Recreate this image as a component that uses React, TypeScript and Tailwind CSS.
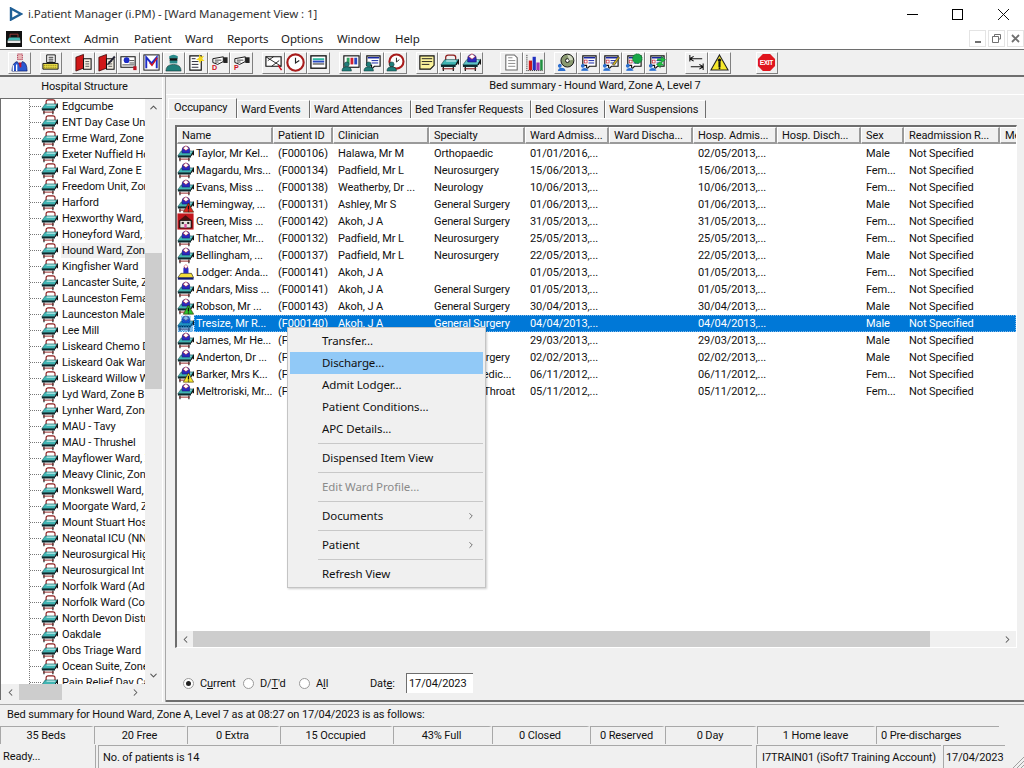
import React from "react";
import { ChevronUp, ChevronDown, ChevronLeft, ChevronRight } from "lucide-react";

type P = { children: React.ReactNode; s?: number };
const Ic = ({ children, s = 20 }: P) => (
  <svg width={s} height={s} viewBox="0 0 20 20" className="block shrink-0">{children}</svg>
);

const BedShape = ({ top = "#3fb4b2", head = false }: { top?: string; head?: boolean }) => (
  <g>
    {!head && <path d="M6 7.5V4.5Q6 2.2 8.5 2.2H14Q16.5 2.2 16.5 4.5V7" fill="none" stroke="#8c1c1c" strokeWidth="1.3" />}
    <path d="M1 12.5L5 7H19.5L16.5 12.5Z" fill={top} stroke="#0a3a3c" strokeWidth=".6" />
    <path d="M6.5 8.4H17" stroke="#d8f3f2" strokeWidth="1.2" />
    <rect x="1" y="12.5" width="15.5" height="2.2" fill="#0b2a2e" />
    <path d="M3.5 14.7V19M14 14.7V19M16.8 12.5L19.4 8V12" stroke="#111" strokeWidth="1.3" fill="none" />
    <path d="M2.5 16.6H15" stroke="#8c1c1c" strokeWidth="1.1" />
  </g>
);
const Head = () => (
  <g>
    <path d="M6 9.5V6Q6 1.6 10.5 1.6T15 6V9.5Z" fill="#2a2ac0" stroke="#101060" strokeWidth=".6" />
    <path d="M7 3.8L10.5 .8L14 3.8L10.5 6.6Z" fill="#fff" stroke="#c01020" strokeWidth="1" strokeDasharray="1 .7" />
  </g>
);
const PatientBed = ({ top = "#3fb4b2" }: { top?: string }) => (
  <g>
    <BedShape top={top} head />
    <Head />
  </g>
);
const Tri = ({ fill, mark = "#111" }: { fill: string; mark?: string }) => (
  <g>
    <path d="M13.5 8.2L19.6 19H7.4Z" fill={fill} stroke="#3a2a00" strokeWidth=".7" />
    <path d="M13.5 11.4V16M13.5 17V18.2" stroke={mark} strokeWidth="1.5" />
  </g>
);
const RowIcon = ({ kind }: { kind: string }) => {
  if (kind === "house")
    return (
      <Ic s={17}>
        <rect x="0.5" y="0.5" width="19" height="19" fill="#c2161c" />
        <path d="M2 9L10 2.5L18 9V18H2Z" fill="#4a1010" />
        <rect x="3.5" y="9" width="13" height="8.5" fill="#e8e4e0" stroke="#111" strokeWidth=".8" />
        <rect x="5.5" y="10.5" width="2.5" height="2.5" fill="#222" />
        <rect x="12" y="10.5" width="2.5" height="2.5" fill="#222" />
        <rect x="8.6" y="13" width="2.8" height="4.5" fill="#d850a0" />
      </Ic>
    );
  if (kind === "lodger")
    return (
      <Ic s={17}>
        <path d="M1 16L4.5 11H17L19.5 16Z" fill="#f4dc3c" stroke="#111" strokeWidth=".7" />
        <rect x="1" y="16" width="18.5" height="2.4" fill="#101870" />
        <path d="M7.5 11V5.5Q7.5 3 10.5 3T13.5 5.5V11Z" fill="#2a2ac0" />
        <path d="M8 3L10.5 .6L13 3L10.5 5.4Z" fill="#fff" stroke="#c01020" strokeWidth="1" strokeDasharray="1 .7" />
      </Ic>
    );
  return (
    <Ic s={17}>
      <PatientBed />
      {kind === "red" && <Tri fill="#e0241c" />}
      {kind === "green" && <Tri fill="#2cc02c" />}
      {kind === "yellow" && <Tri fill="#f7e92c" />}
      {kind === "sel" && (
        <g>
          <defs>
            <pattern id="hatch" width="2" height="2" patternUnits="userSpaceOnUse">
              <rect width="1" height="1" fill="#0078d7" />
              <rect x="1" y="1" width="1" height="1" fill="#0078d7" />
            </pattern>
          </defs>
          <path d="M1 20V12L5 8V1H16V8H19V20Z" fill="url(#hatch)" />
        </g>
      )}
    </Ic>
  );
};

const Person = ({ c = "#1f7e7a" }: { c?: string }) => (
  <g>
    <circle cx="6" cy="12" r="2.6" fill={c} stroke="#0a2a2a" strokeWidth=".5" />
    <path d="M1 19Q1 14.6 6 14.6T11 19Z" fill={c} stroke="#0a2a2a" strokeWidth=".5" />
  </g>
);
const FormPerson = ({ children }: { children?: React.ReactNode }) => (
  <g>
    <path d="M4 3H18V14H11L8 17V13H4Z" fill="#fff" stroke="#111" strokeWidth="1.2" />
    <path d="M5 5H17" stroke="#1020a0" strokeWidth="1.5" />
    <path d="M10 8H16M10 10.5H16" stroke="#1020a0" strokeWidth="1" />
    <rect x="5.5" y="7.5" width="3" height="3" fill="#fff" stroke="#c01020" strokeWidth=".7" />
    {children}
    <path d="M6 13.5A2 2 0 1 1 6 13.4Z" fill="#2b6fd0" />
    <path d="M2 19Q2.5 15.5 6 15.5T10 19Z" fill="#2b6fd0" stroke="#fff" strokeWidth=".4" />
  </g>
);
const Cam = ({ l }: { l: string }) => (
  <g>
    <path d="M3 6L14 4V9L8 12L3 10Z" fill="#fff" stroke="#111" strokeWidth="1" />
    <path d="M5 7.5H12M5 9.5H9" stroke="#111" strokeWidth=".8" />
    <rect x="14" y="4.5" width="4.5" height="6" fill="#222" />
    <text x="2" y="18" fontSize="7.5" fontWeight="700" fill="#d01020" fontFamily="Liberation Sans, sans-serif">{l}</text>
  </g>
);
const Book = ({ children }: { children?: React.ReactNode }) => (
  <g>
    <path d="M2 4.5L10 1.5V16L2 19Z" fill="#d01818" stroke="#300" strokeWidth=".8" />
    <path d="M10 6H18V17H10Z" fill="#f4efe2" stroke="#111" strokeWidth="1.1" />
    <path d="M12 9H16M12 11.5H16M12 14H16" stroke="#444" strokeWidth=".9" />
    {children}
  </g>
);

const toolbarIcons: React.ReactNode[][] = [
  [
    <g>
      <path d="M8 1H13V7H8Z" fill="#e8b8b8" stroke="#a01030" strokeDasharray="1 1" />
      <path d="M2 19Q2.5 10 7.5 9L10.5 13L13 9Q18 10 18 19Z" fill="#2a58d0" stroke="#0a1a60" strokeWidth=".7" />
      <path d="M3.5 19V13M7 19V12" stroke="#fff" strokeWidth="1.4" />
      <path d="M9 10L12 10V14L10.5 16Z" fill="#c01030" />
    </g>,
  ],
  [
    <g>
      <path d="M6 2H15V10H6Z" fill="#fff" stroke="#111" />
      <path d="M8 4.5H13M8 6.5H13M8 8.5H13" stroke="#111" strokeWidth=".9" />
      <path d="M2 11H18V17H2Z" fill="#ece04c" stroke="#111" />
      <path d="M3 13H17M3 15H17" stroke="#807010" strokeDasharray="1 1" />
    </g>,
  ],
  [
    <Book />,
    <Book>
      <path d="M11 11L18 3L19.5 4.5L12.5 12L10.5 13Z" fill="#223" />
    </Book>,
    <g>
      <path d="M2 4H17V15H2Z" fill="#fff" stroke="#111" strokeWidth="1.1" />
      <circle cx="8" cy="7.5" r="3" fill="#1c2cc8" />
      <path d="M11 8H16M11 10.5H16M3.5 12.5H16" stroke="#333" strokeWidth=".9" />
      <path d="M15 14H18.5V18H15Z" fill="#c01020" />
    </g>,
    <g>
      <rect x="2" y="2" width="16" height="16" fill="#fff" stroke="#111" />
      <path d="M4.5 16V4.5L10 11L15.5 4.5V16" fill="none" stroke="#1c2cc8" strokeWidth="2" />
      <path d="M8 10L10.5 13L16 5" fill="none" stroke="#d01020" strokeWidth="1.4" />
    </g>,
    <g>
      <path d="M5.5 6V3.5Q10 0 14.5 3.5V6Z" fill="#2a8a8a" />
      <rect x="6" y="5.5" width="8" height="3" fill="#111" />
      <path d="M6 8H14V11H6Z" fill="#2a8a8a" />
      <path d="M2 19Q2 12 10 12T18 19Z" fill="#1f7e7a" stroke="#0a2a2a" strokeWidth=".6" />
    </g>,
    <g>
      <path d="M3 3H15V18H3Z" fill="#fff" stroke="#111" strokeWidth="1.2" />
      <path d="M5 6H9M5 9H12M5 12H12M5 15H12" stroke="#223" />
      <path d="M13 1L14.5 4L18 3L16 6L18.5 8.5L15 8.5L13.5 11L12.5 8L9.5 7L12.5 5Z" fill="#f4d820" />
    </g>,
    <Cam l="D" />,
    <Cam l="P" />,
  ],
  [
    <g>
      <path d="M2 4H18V14H2Z" fill="#fff" stroke="#111" strokeWidth="1.2" />
      <path d="M2 4L18 14M4 8L10 4M8 14L16 8" stroke="#111" strokeWidth=".9" />
      <path d="M15 13L18.5 18" stroke="#d01020" strokeWidth="1.6" />
    </g>,
    <g>
      <circle cx="10" cy="10" r="8.6" fill="#fff" stroke="#a81c1c" strokeWidth="2.2" />
      <path d="M10 5V10.5L14 8" fill="none" stroke="#222" strokeWidth="1.2" />
    </g>,
    <g>
      <rect x="2" y="3" width="16" height="13" fill="#fff" stroke="#111" strokeWidth="1.4" />
      <rect x="4" y="5.5" width="12" height="2" fill="#30b8a0" />
      <rect x="4" y="8" width="12" height="2" fill="#2848c0" />
      <rect x="4" y="10.5" width="12" height="2" fill="#888" />
    </g>,
  ],
  [
    <g>
      <rect x="3" y="3" width="16" height="12" fill="#fff" stroke="#111" strokeWidth="1.2" />
      <rect x="6" y="5" width="3" height="7" fill="#30a060" />
      <rect x="10" y="5" width="3" height="7" fill="#d02030" />
      <rect x="14" y="5" width="3" height="7" fill="#2848c0" />
      <Person />
    </g>,
    <g>
      <path d="M4 3H18V14H12L9 17V13H4Z" fill="#fff" stroke="#111" strokeWidth="1.2" />
      <path d="M5 5H17" stroke="#1020a0" strokeWidth="1.5" />
      <path d="M9 8H16M9 10.5H16" stroke="#1020a0" />
      <Person />
    </g>,
    <g>
      <circle cx="11" cy="9" r="7.4" fill="#fff" stroke="#a81c1c" strokeWidth="2.2" />
      <path d="M11 5V9.5L14 7" fill="none" stroke="#222" />
      <Person />
    </g>,
  ],
  [
    <g>
      <path d="M3 3H18V13L14 17H3Z" fill="#fbf39c" stroke="#111" strokeWidth="1.2" />
      <path d="M5 6H16M5 9H16M5 12H13" stroke="#222" />
    </g>,
    <BedShape />,
    <PatientBed top="#5fc4c8" />,
  ],
  [
    <g>
      <path d="M4 2H13L16 5V18H4Z" fill="#fff" stroke="#666" strokeWidth="1.1" />
      <path d="M6.5 5H11M6.5 8H14M6.5 11H14M6.5 14H14" stroke="#888" />
    </g>,
    <g>
      <path d="M1.5 18.5H19M2 2V18" stroke="#111" strokeDasharray="1 1" />
      <rect x="4" y="8" width="3.4" height="10" fill="#d01818" />
      <rect x="8" y="4" width="3.4" height="14" fill="#2030c0" />
      <rect x="12" y="10" width="3.4" height="8" fill="#a030b0" />
      <rect x="16" y="7" width="2.6" height="11" fill="#209040" />
    </g>,
  ],
  [
    <g>
      <circle cx="12" cy="8" r="6.8" fill="#8a9a70" stroke="#111" />
      <circle cx="12" cy="8" r="2" fill="#fff" stroke="#111" />
      <path d="M12 2A6 6 0 0 1 18 7L14 8Z" fill="#d0d8c0" />
      <path d="M6 13.5A2 2 0 1 1 6 13.4Z" fill="#2b6fd0" />
      <path d="M2 19Q2.5 15.5 6 15.5T10 19Z" fill="#2b6fd0" />
    </g>,
    <FormPerson />,
    <FormPerson>
      <path d="M12 12L18 4L19.5 5L14 13Z" fill="#d8b820" stroke="#222" strokeWidth=".6" />
    </FormPerson>,
    <FormPerson>
      <circle cx="14" cy="6" r="5" fill="#18a848" stroke="#086828" strokeDasharray="1.2 .6" />
    </FormPerson>,
    <FormPerson>
      <path d="M11 6H15V3.5L19.5 7L15 10.5V8H11Z" fill="#20c040" stroke="#086828" strokeWidth=".5" />
      <path d="M18 13H14V15.5L10 12L14 9" fill="#20c040" stroke="#086828" strokeWidth=".5" />
    </FormPerson>,
  ],
  [
    <g>
      <path d="M3 2V9M3 6H16M3 6L7 3.5M3 6L7 8.5" stroke="#111" strokeWidth="1.1" fill="none" />
      <path d="M17 11V18M4 14.5H17M17 14.5L13 12M17 14.5L13 17" stroke="#111" strokeWidth="1.1" fill="none" />
    </g>,
    <g>
      <path d="M10 2L19 18H1Z" fill="#f7e92c" stroke="#222" strokeWidth="1.1" />
      <circle cx="10" cy="7.5" r="1.7" fill="#111" />
      <path d="M10 9V15" stroke="#111" strokeWidth="2.2" />
      <circle cx="10" cy="16" r="1" fill="#111" />
    </g>,
  ],
  [
    <g>
      <path d="M6.2 1H13.8L19 6.2V13.8L13.8 19H6.2L1 13.8V6.2Z" fill="#e0161e" />
      <text x="10" y="12.5" textAnchor="middle" fontSize="7" fontWeight="700" fill="#fff" fontFamily="Liberation Sans, sans-serif" textLength="14">EXIT</text>
    </g>,
  ],
];
const groupMargins = ["ml-[8px]", "ml-[9px]", "ml-[10px]", "ml-[9px]", "ml-[9px]", "ml-[9px]", "ml-[17px]", "ml-[9px]", "ml-[18px]", "ml-[25px]"];

const ward = [
  "Edgcumbe", "ENT Day Case Unit", "Erme Ward, Zone C", "Exeter Nuffield Hospital", "Fal Ward, Zone E", "Freedom Unit, Zone A", "Harford",
  "Hexworthy Ward, Zone", "Honeyford Ward, Zone", "Hound Ward, Zone A", "Kingfisher Ward", "Lancaster Suite, Zone", "Launceston Female", "Launceston Male",
  "Lee Mill", "Liskeard Chemo Day", "Liskeard Oak Ward", "Liskeard Willow Ward", "Lyd Ward, Zone B", "Lynher Ward, Zone", "MAU - Tavy", "MAU - Thrushel",
  "Mayflower Ward, Zone", "Meavy Clinic, Zone", "Monkswell Ward, Z", "Moorgate Ward, Zone", "Mount Stuart Hospital", "Neonatal ICU (NNU)", "Neurosurgical High",
  "Neurosurgical Int", "Norfolk Ward (Adult)", "Norfolk Ward (Covid)", "North Devon District", "Oakdale", "Obs Triage Ward", "Ocean Suite, Zone", "Pain Relief Day Case",
];

const cols: [string, string][] = [
  ["Name", "w-[96px]"], ["Patient ID", "w-[60px]"], ["Clinician", "w-[96px]"], ["Specialty", "w-[96px]"], ["Ward Admiss...", "w-[84px]"], ["Ward Discha...", "w-[84px]"],
  ["Hosp. Admis...", "w-[84px]"], ["Hosp. Disch...", "w-[84px]"], ["Sex", "w-[43px]"], ["Readmission R...", "w-[96px]"], ["Me", "w-[18px]"],
];

const rows: [string, string, string, string, string, string, string][] = [
  ["p", "Taylor, Mr Kel...", "(F000106)", "Halawa, Mr M", "Orthopaedic", "01/01/2016,...|02/05/2013,...", "Male"],
  ["p", "Magardu, Mrs...", "(F000134)", "Padfield, Mr L", "Neurosurgery", "15/06/2013,...|15/06/2013,...", "Fem..."],
  ["p", "Evans, Miss ...", "(F000138)", "Weatherby, Dr ...", "Neurology", "10/06/2013,...|10/06/2013,...", "Fem..."],
  ["red", "Hemingway, ...", "(F000131)", "Ashley, Mr S", "General Surgery", "01/06/2013,...|01/06/2013,...", "Male"],
  ["house", "Green, Miss ...", "(F000142)", "Akoh, J A", "General Surgery", "31/05/2013,...|31/05/2013,...", "Fem..."],
  ["p", "Thatcher, Mr...", "(F000132)", "Padfield, Mr L", "Neurosurgery", "25/05/2013,...|25/05/2013,...", "Fem..."],
  ["p", "Bellingham, ...", "(F000137)", "Padfield, Mr L", "Neurosurgery", "22/05/2013,...|22/05/2013,...", "Male"],
  ["lodger", "Lodger: Anda...", "(F000141)", "Akoh, J A", "", "01/05/2013,...|01/05/2013,...", "Fem..."],
  ["p", "Andars, Miss ...", "(F000141)", "Akoh, J A", "General Surgery", "01/05/2013,...|01/05/2013,...", "Fem..."],
  ["green", "Robson, Mr ...", "(F000143)", "Akoh, J A", "General Surgery", "30/04/2013,...|30/04/2013,...", "Male"],
  ["sel", "Tresize, Mr R...", "(F000140)", "Akoh, J A", "General Surgery", "04/04/2013,...|04/04/2013,...", "Male"],
  ["p", "James, Mr He...", "(F000139)", "Akoh, J A", "", "29/03/2013,...|29/03/2013,...", "Male"],
  ["p", "Anderton, Dr ...", "(F000136)", "Akoh, J A", "General Surgery", "02/02/2013,...|02/02/2013,...", "Male"],
  ["yellow", "Barker, Mrs K...", "(F000135)", "Akoh, J A", "General Medic...", "06/11/2012,...|06/11/2012,...", "Fem..."],
  ["p", "Meltroriski, Mr...", "(F000133)", "Akoh, J A", "Ear, Nose, Throat", "05/11/2012,...|05/11/2012,...", "Fem..."],
];

const Sep = () => <div className="h-[7px] flex items-center pl-[28px]"><div className="h-px w-full bg-[#c8c8c8]" /></div>;
const MenuItem = ({ t, hot, off, arrow }: { t: string; hot?: boolean; off?: boolean; arrow?: boolean }) => (
  <div className={`h-[22px] flex items-center pl-[32px] pr-[7px] justify-between ${hot ? "bg-[#91c9f7]" : ""} ${off ? "text-[#8a8a8a]" : "text-[#111]"}`}>
    <span>{t}</span>
    {arrow && <ChevronRight size={10} strokeWidth={1.6} color="#333" />}
  </div>
);

const Radio = ({ on }: { on?: boolean }) => (
  <span className="w-[11px] h-[11px] rounded-full bg-white border border-[#9a9a9a] flex items-center justify-center shrink-0">
    {on && <span className="w-[5px] h-[5px] rounded-full bg-[#222]" />}
  </span>
);

const stats: [string, string][] = [
  ["35 Beds", "w-[94px]"], ["20 Free", "w-[93px]"], ["0 Extra", "w-[93px]"], ["15 Occupied", "w-[113px]"], ["43% Full", "w-[99px]"], ["0 Closed", "w-[98px]"],
  ["0 Reserved", "w-[75px]"], ["0 Day", "w-[92px]"], ["1 Home leave", "w-[119px]"],
];

export default function App() {
  return (
    <div className="relative w-[1024px] h-[768px] overflow-hidden flex flex-col bg-[#f0f0f0] text-[#111] text-[11px] tracking-[-0.1px] leading-none [font-family:Roboto,sans-serif]">
      {/* Title bar */}
      <div className="h-[28px] bg-white flex items-center shrink-0 [font-family:'Noto_Sans',sans-serif] text-[11.5px]">
        <svg width="14" height="14" viewBox="0 0 14 14" className="ml-[9px] mr-[5px]">
          <path d="M2 1.5L12 7L2 12.5Z" fill="none" stroke="#1f5f96" strokeWidth="2.4" />
        </svg>
        <span className="text-[#333]">i.Patient Manager (i.PM) - [Ward Management View : 1]</span>
        <div className="ml-auto flex items-center h-full">
          <div className="w-[46px] pl-[2px] flex justify-center"><div className="w-[11px] h-px bg-black" /></div>
          <div className="w-[46px] flex justify-center"><div className="w-[11px] h-[11px] border border-black" /></div>
          <svg width="44" height="12" viewBox="0 0 44 12"><path d="M18 1L29 12M29 1L18 12" stroke="#111" /></svg>
        </div>
      </div>
      {/* Menu bar */}
      <div className="h-[21px] bg-white flex items-center shrink-0 [font-family:'Noto_Sans',sans-serif] text-[11.5px]">
        <svg width="16" height="16" viewBox="0 0 20 20" className="ml-[6px] mr-[7px]">
          <rect width="20" height="20" fill="#111" />
          <path d="M2 12L4 8H17L18 12Z" fill="#43b7b4" />
          <rect x="2" y="12" width="16" height="3" fill="#e8e8e8" />
          <path d="M5 8V4H15V8" stroke="#b04040" fill="none" />
        </svg>
        {[["Context","w-[55px]"],["Admin","w-[50px]"],["Patient","w-[51px]"],["Ward","w-[42px]"],["Reports","w-[54px]"],["Options","w-[56px]"],["Window","w-[58px]"],["Help","w-[30px]"]].map(([t,w]) => (
          <span key={t} className={`${w} text-[#222]`}>{t}</span>
        ))}
        <div className="ml-auto flex gap-[2px] text-[#666]">
          <div className="w-[17px] h-[17px] border border-[#e4e4e4] flex items-end justify-center pb-[3px]"><div className="w-[6px] h-[2px] bg-[#707070]" /></div>
          <div className="w-[17px] h-[17px] border border-[#e4e4e4] flex items-center justify-center">
            <svg width="9" height="9" viewBox="0 0 9 9"><path d="M2.5 2.5V.5H8.5V5H6.5M.5 2.5H6.5V8.5H.5Z" fill="none" stroke="#707070" /></svg>
          </div>
          <div className="w-[17px] h-[17px] border border-[#e4e4e4] flex items-center justify-center">
            <svg width="9" height="9" viewBox="0 0 9 9"><path d="M1 1L8 8M8 1L1 8" stroke="#707070" strokeWidth="1.8" /></svg>
          </div>
        </div>
      </div>
      {/* Toolbar */}
      <div className="h-[28px] shrink-0 flex items-center border-t-[1px] border-b-[2px] border-[#6e6e6e]">
        {toolbarIcons.map((g, i) => (
          <div key={i} className={`flex ${groupMargins[i]}`}>
            {g.map((ic, j) => (
              <div key={j} className="w-[22.6px] h-[22px] flex items-center justify-center border-t border-l border-white border-r border-b border-r-[#808080] border-b-[#808080] bg-[#f0f0f0]">
                <Ic s={19}>{ic}</Ic>
              </div>
            ))}
          </div>
        ))}
      </div>
      {/* Main */}
      <div className="flex h-[625px] shrink-0">
        {/* Left */}
        <div className="w-[162px] flex flex-col shrink-0 pb-[2px]">
          <div className="h-[21px] flex items-center justify-center pl-[7px] pb-[2px] shrink-0">Hospital Structure</div>
          <div className="flex-1 min-h-0 flex flex-col border-t border-l border-[#6e6e6e] bg-white border-r-0">
            <div className="flex-1 min-h-0 flex">
              <div className="relative w-[144px] overflow-hidden pl-[40px]">
                <div className="absolute left-[28px] top-0 bottom-0 border-l border-dotted border-[#777]" />
                <div className="-mt-px">
                  {ward.map((w) => (
                    <div key={w} className="h-[16px] flex items-center relative">
                      <div className="absolute left-[-11px] w-[11px] border-t border-dotted border-[#777]" />
                      <Ic s={17}><BedShape /></Ic>
                      <span className={`ml-[3px] pl-[1px] h-[15px] flex items-center whitespace-nowrap flex-1 ${w.startsWith("Hound") ? "bg-[#f0f0f0]" : ""}`}>{w}</span>
                    </div>
                  ))}
                </div>
              </div>
              <div className="w-[17px] bg-[#f0f0f0] flex flex-col items-center shrink-0">
                <div className="h-[17px] flex items-center justify-center shrink-0"><ChevronUp size={11} strokeWidth={2.2} color="#555" /></div>
                <div className="h-[137px] shrink-0" />
                <div className="h-[136px] w-full bg-[#cdcdcd] shrink-0" />
                <div className="flex-1" />
                <div className="h-[17px] flex items-center justify-center shrink-0"><ChevronDown size={11} strokeWidth={2.2} color="#555" /></div>
              </div>
            </div>
            <div className="h-[16px] bg-[#f0f0f0] flex items-center shrink-0">
              <div className="w-[18px] flex justify-center"><ChevronLeft size={11} strokeWidth={2.2} color="#555" /></div>
              <div className="w-[43px] h-full bg-[#cdcdcd]" />
              <div className="ml-auto mr-[21px] flex"><ChevronRight size={11} strokeWidth={2.2} color="#555" /></div>
            </div>
          </div>
        </div>
        {/* Splitter */}
        <div className="w-[4px] shrink-0 border-l border-white border-r border-r-[#a8a8a8]" />
        {/* Right */}
        <div className="flex-1 min-w-0 flex flex-col border-b-2 border-[#6e6e6e]">
          <div className="h-[18px] shrink-0 flex items-center justify-center border-b border-white">Bed summary - Hound Ward, Zone A, Level 7</div>
          <div className="h-[3px] shrink-0" />
          <div className="h-[21px] shrink-0 flex items-end pl-[2px] border-b border-white">
            {[
              ["Occupancy", "w-[69px]", true], ["Ward Events", "w-[73px]"], ["Ward Attendances", "w-[101px]"], ["Bed Transfer Requests", "w-[120px]"], ["Bed Closures", "w-[74px]"], ["Ward Suspensions", "w-[101px]"],
            ].map(([t, w, sel]) => (
              <div key={t as string} className={`${w} ${sel ? "h-[20px] pb-[3px] pl-[5px]" : "h-[18px] pl-[3px]"} flex items-center whitespace-nowrap border-t border-l border-white border-r border-r-[#6e6e6e]`}>{t}</div>
            ))}
          </div>
          <div className="h-[6px] shrink-0" />
          <div className="h-[523px] ml-[9px] mr-[7px] shrink-0 flex flex-col border-t-2 border-l-2 border-[#6e6e6e] border-r border-b border-r-white border-b-white bg-white">
            <div className="h-[17px] shrink-0 flex bg-[#f0f0f0] overflow-hidden">
              {cols.map(([c, w]) => (
                <div key={c} className={`${w} shrink-0 h-full flex items-center pl-[4px] whitespace-nowrap overflow-hidden border-t border-l border-white border-r-2 border-b-2 border-r-[#9a9a9a] border-b-[#9a9a9a]`}>{c}</div>
              ))}
            </div>
            <div className="flex-1 min-h-0 pt-[1px]">
              {rows.map((r) => {
                const [a, b] = r[5].split("|");
                const sel = r[0] === "sel";
                const Cell = ({ w, t }: { w: string; t: string }) => <div className={`${w} pl-[6px] whitespace-nowrap overflow-hidden shrink-0`}>{t}</div>;
                return (
                  <div key={r[1]} className="h-[17px] flex items-center">
                    <div className="w-[17px] shrink-0"><RowIcon kind={r[0]} /></div>
                    <div className={`flex-1 min-w-0 h-full flex items-center ${sel ? "bg-[#0078d7] text-white outline-1 outline-dotted outline-offset-[-1px] outline-[#7fb8e8]" : ""}`}>
                      <div className="w-[78px] pl-[2px] whitespace-nowrap overflow-hidden shrink-0">{r[1]}</div>
                      <Cell w="w-[60px]" t={r[2]} />
                      <Cell w="w-[96px]" t={r[3]} />
                      <Cell w="w-[96px]" t={r[4]} />
                      <Cell w="w-[84px]" t={a} />
                      <Cell w="w-[84px]" t="" />
                      <Cell w="w-[84px]" t={b} />
                      <Cell w="w-[84px]" t="" />
                      <Cell w="w-[43px]" t={r[6]} />
                      <Cell w="w-[96px]" t="Not Specified" />
                    </div>
                  </div>
                );
              })}
            </div>
            <div className="h-[16px] shrink-0 bg-[#f0f0f0] flex items-center">
              <div className="w-[16px] flex justify-center shrink-0"><ChevronLeft size={11} strokeWidth={2.2} color="#555" /></div>
              <div className="w-[737px] h-full bg-[#cdcdcd] shrink-0" />
              <div className="flex-1 flex justify-end pr-[3px]"><ChevronRight size={11} strokeWidth={2.2} color="#555" /></div>
            </div>
          </div>
          <div className="flex-1 flex items-center pl-[17px] pt-[18px]">
            <Radio on />
            <span className="ml-[6px] w-[43px]">C<u>u</u>rrent</span>
            <Radio />
            <span className="ml-[6px] w-[39px]">D/<u>T</u>'d</span>
            <Radio />
            <span className="ml-[6px] w-[54px]">A<u>l</u>l</span>
            <span className="w-[36px]">Dat<u>e</u>:</span>
            <div className="w-[67px] h-[20px] bg-white border-t border-l border-[#6e6e6e] flex items-center pl-[2px]">17/04/2023</div>
          </div>
        </div>
      </div>
      {/* Bottom */}
      <div className="h-[3px] shrink-0 border-b border-[#a8a8a8]" />
      <div className="h-[19px] shrink-0 flex items-center pl-[7px]">Bed summary for Hound Ward, Zone A, Level 7 as at 08:27 on 17/04/2023 is as follows:</div>
      <div className="h-[19px] shrink-0 flex mt-[2px]">
        {stats.map(([t, w]) => (
          <div key={t} className={`${w} shrink-0 h-[18px] flex items-center justify-center border-t border-l border-[#a8a8a8] border-r-[3px] border-r-[#f0f0f0]`}>{t}</div>
        ))}
        <div className="w-[123px] h-[18px] flex items-center pl-[4px] border-t border-l border-[#a8a8a8]">0 Pre-discharges</div>
      </div>
      <div className="flex-1 min-h-0 flex">
        <div className="w-[96px] flex items-center pl-[3px] border-r border-[#a8a8a8] mr-[2px]">Ready...</div>
        <div className="w-[654px] flex items-center pl-[4px] border-t border-l border-[#a8a8a8]">No. of patients is 14</div>
        <div className="w-[4px]" />
        <div className="w-[185px] flex items-center pl-[5px] border-t border-l border-[#a8a8a8] whitespace-nowrap">I7TRAIN01 (iSoft7 Training Account)</div>
        <div className="w-[62px] ml-[2px] flex items-center pl-[2px] border-t border-l border-[#a8a8a8]">17/04/2023</div>
        <div className="flex-1 flex items-end justify-end">
          <svg width="12" height="12" viewBox="0 0 12 12"><path d="M1 12L12 1M5 12L12 5M9 12L12 9" stroke="#a0a0a0" /></svg>
        </div>
      </div>
      {/* Context menu */}
      <div className="absolute left-[287px] top-[327px] w-[199px] h-[261px] bg-[#f0f0f0] border border-[#c4c4c4] p-[2px] shadow-[1px_1px_2px_rgba(0,0,0,0.2)] text-[11.5px] [font-family:'Noto_Sans',sans-serif]">
        <MenuItem t="Transfer..." />
        <MenuItem t="Discharge..." hot />
        <MenuItem t="Admit Lodger..." />
        <MenuItem t="Patient Conditions..." />
        <MenuItem t="APC Details..." />
        <Sep />
        <MenuItem t="Dispensed Item View" />
        <Sep />
        <MenuItem t="Edit Ward Profile..." off />
        <Sep />
        <MenuItem t="Documents" arrow />
        <Sep />
        <MenuItem t="Patient" arrow />
        <Sep />
        <MenuItem t="Refresh View" />
      </div>
    </div>
  );
}
